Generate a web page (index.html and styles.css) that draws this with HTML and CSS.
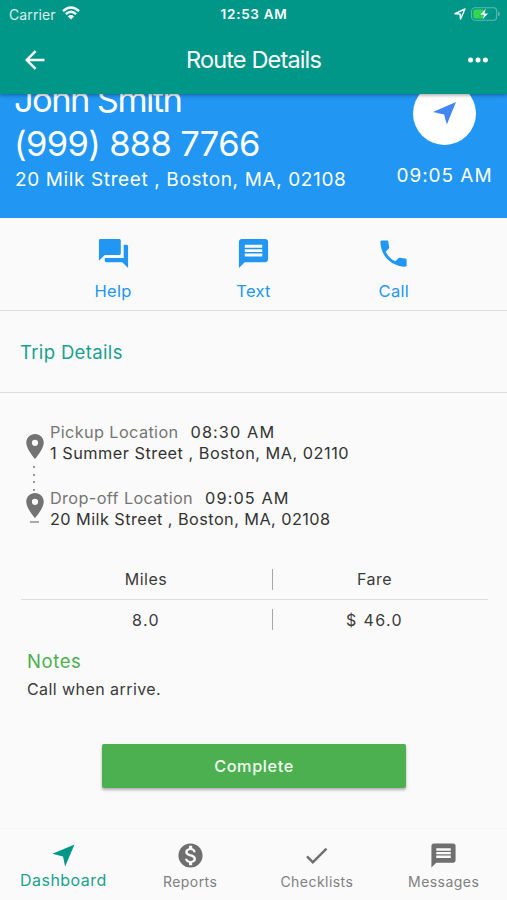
FILE: index.html
```html
<!DOCTYPE html>
<html lang="en">
<head>
<meta charset="utf-8">
<title>Route Details</title>
<link rel="stylesheet" href="styles.css">
</head>
<body>
<div class="screen">
  <header class="header">
    <div class="status">
      <div class="status-left">
        <span class="carrier">Carrier</span>
        <svg class="wifi" viewBox="0 0 18 14"><path fill="none" stroke="#fff" stroke-width="2.4" d="M1 5.2Q9-2.4 17 5.2M3.9 8.2Q9 3.4 14.1 8.2"/><path fill="#fff" d="M9 13.6 5.9 10.4Q9 7.6 12.1 10.4Z"/></svg>
      </div>
      <span class="clock">12:53 AM</span>
      <div class="status-right">
        <svg class="locator" viewBox="0 0 12 12"><path fill="none" stroke="#fff" stroke-width="1.4" stroke-linejoin="round" d="M1 5.7 11 1 6.5 11 6 6Z"/></svg>
        <svg class="battery" viewBox="0 0 30 14"><rect x=".6" y=".6" width="26" height="12.8" rx="3.5" fill="none" stroke="#63b9ae" stroke-width="1.1"/><path fill="#63b9ae" d="M28 4.5q1.8.6 1.8 2.5T28 9.5z"/><rect x="2.4" y="2.4" width="10.8" height="9.2" rx="1.8" fill="#32d74b"/><path fill="#fff" stroke="#009688" stroke-width=".5" d="M15.8.8 9 8h4l-1.400 5.200L18.200 6.300h-4z"/></svg>
      </div>
    </div>
    <div class="appbar">
      <svg class="back" viewBox="0 0 20 20"><path fill="none" stroke="#fff" stroke-width="2.4" d="M19.5 10H2M10.6 1.1 1.7 10l8.900 8.900"/></svg>
      <h1 class="title">Route Details</h1>
      <svg class="more" viewBox="0 0 20 6"><g fill="#fff"><circle cx="2.6" cy="3" r="2.5"/><circle cx="10" cy="3" r="2.5"/><circle cx="17.4" cy="3" r="2.5"/></g></svg>
    </div>
  </header>

  <section class="hero">
    <div class="contact">
      <div class="name">John Smith</div>
      <div class="phone">(999) 888 7766</div>
      <div class="address">20 Milk Street , Boston, MA, 02108</div>
    </div>
    <div class="arrival">
      <div class="navigate"><svg viewBox="0 0 24 24"><path fill="#4285f4" d="M24 0 14.4 23.5 11.6 13 0 10.4Z"/></svg></div>
      <div class="eta">09:05 AM</div>
    </div>
  </section>

  <nav class="actions">
    <a class="action"><svg viewBox="0 0 24 24"><path d="M21 6h-2v9H6v2c0 .55.45 1 1 1h11l4 4V7c0-.55-.45-1-1-1zm-4 6V3c0-.55-.45-1-1-1H3c-.55 0-1 .45-1 1v14l4-4h10c.55 0 1-.45 1-1z"/></svg><span>Help</span></a>
    <a class="action"><svg viewBox="0 0 24 24"><path d="M20 2H4c-1.100 0-1.990.9-1.990 2L2 22l4-4h14c1.100 0 2-.9 2-2V4c0-1.100-.9-2-2-2zm-2 12H6v-2h12v2zm0-3H6V9h12v2zm0-3H6V6h12v2z"/></svg><span>Text</span></a>
    <a class="action"><svg viewBox="0 0 24 24"><path d="M6.620 10.790c1.440 2.830 3.760 5.140 6.590 6.590l2.200-2.200c.27-.27.67-.36 1.020-.24 1.120.37 2.330.57 3.570.57.55 0 1 .45 1 1V20c0 .55-.45 1-1 1-9.390 0-17-7.610-17-17 0-.55.45-1 1-1h3.500c.55 0 1 .45 1 1 0 1.250.2 2.450.57 3.570.11.35.03.74-.25 1.020l-2.200 2.200z"/></svg><span>Call</span></a>
  </nav>

  <h2 class="section-title">Trip Details</h2>

  <main class="trip">
    <div class="route">
      <div class="track">
        <svg class="pin" viewBox="5 2 14 20"><path d="M12 2C8.130 2 5 5.130 5 9c0 5.250 7 13 7 13s7-7.750 7-13c0-3.870-3.130-7-7-7zm0 9.500a2.500 2.500 0 1 1 0-5 2.500 2.500 0 0 1 0 5z"/></svg>
        <div class="dots"><i></i><i></i><i></i><i></i></div>
        <svg class="pin" viewBox="5 2 14 20"><path d="M12 2C8.130 2 5 5.130 5 9c0 5.250 7 13 7 13s7-7.750 7-13c0-3.870-3.130-7-7-7zm0 9.500a2.500 2.500 0 1 1 0-5 2.500 2.500 0 0 1 0 5z"/></svg>
        <div class="dash"></div>
      </div>
      <div class="stops">
        <div class="stop">
          <div class="line"><span class="label">Pickup Location</span><span class="time">08:30 AM</span></div>
          <div class="line">1 Summer Street , Boston, MA, 02110</div>
        </div>
        <div class="stop">
          <div class="line"><span class="label">Drop-off Location</span><span class="time">09:05 AM</span></div>
          <div class="line dropoff">20 Milk Street , Boston, MA, 02108</div>
        </div>
      </div>
    </div>

    <div class="figures">
      <div class="row head"><span>Miles</span><i></i><span>Fare</span></div>
      <div class="row values"><span>8.0</span><i></i><span>$ 46.0</span></div>
    </div>

    <div class="notes">
      <h3>Notes</h3>
      <p>Call when arrive.</p>
    </div>

    <button class="complete">Complete</button>
  </main>

  <nav class="tabs">
    <a class="tab active"><svg viewBox="0 0 24 24"><path d="M23.500.5 13.700 23.500 11.500 13 .5 10.200Z"/></svg><span>Dashboard</span></a>
    <a class="tab"><svg viewBox="0 0 24 24"><path d="M12 2C6.480 2 2 6.480 2 12s4.480 10 10 10 10-4.480 10-10S17.520 2 12 2zm1.410 16.090V20h-2.670v-1.930c-1.710-.36-3.160-1.460-3.270-3.400h1.960c.1 1.050.82 1.870 2.650 1.870 1.960 0 2.400-.98 2.400-1.590 0-.83-.44-1.610-2.670-2.140-2.480-.6-4.180-1.620-4.180-3.670 0-1.720 1.390-2.840 3.110-3.210V4h2.670v1.950c1.860.45 2.790 1.860 2.850 3.390H14.300c-.05-1.110-.64-1.870-2.220-1.870-1.500 0-2.400.68-2.400 1.640 0 .84.65 1.390 2.670 1.910s4.180 1.390 4.180 3.910c-.01 1.830-1.380 2.830-3.120 3.160z"/></svg><span>Reports</span></a>
    <a class="tab"><svg viewBox="0 0 24 24"><path d="M9 16.170 4.830 12l-1.420 1.410L9 19 21 7l-1.410-1.410z"/></svg><span>Checklists</span></a>
    <a class="tab"><svg viewBox="0 0 24 24"><path d="M20 2H4c-1.100 0-1.990.9-1.990 2L2 22l4-4h14c1.100 0 2-.9 2-2V4c0-1.100-.9-2-2-2zm-2 12H6v-2h12v2zm0-3H6V9h12v2zm0-3H6V6h12v2z"/></svg><span>Messages</span></a>
  </nav>
</div>
</body>
</html>
```
FILE: styles.css
```css
* { box-sizing: border-box; margin: 0; padding: 0; }
body { font-family: Inter, "Liberation Sans", sans-serif; background: #fafafa; color: #3a3a3a; }
svg { display: block; flex: none; }
.screen { width: 507px; height: 900px; overflow: hidden; display: flex; flex-direction: column; white-space: nowrap; }

.header { flex: none; height: 94px; background: #009688; color: #fff; position: relative; z-index: 1; box-shadow: 0 1px 4px rgba(0,0,0,.4); }
.status { height: 28px; padding: 0 7px 0 9px; display: grid; grid-template-columns: 1fr auto 1fr; align-items: center; }
.status-left, .status-right { display: flex; align-items: center; gap: 6px; }
.status-right { justify-content: flex-end; gap: 5px; }
.carrier { font-size: 14px; letter-spacing: .1px; color: #d9f0ed; }
.wifi { width: 18px; height: 14px; margin-top: -2px; }
.clock { font-size: 13.5px; font-weight: 600; letter-spacing: .7px; margin-right: 1px; }
.locator { width: 12px; height: 12px; }
.battery { width: 29px; height: 14px; }
.appbar { height: 64px; padding: 0 19px 0 25px; display: grid; grid-template-columns: 1fr auto 1fr; align-items: center; }
.back { width: 20px; height: 20px; }
.title { font-size: 23.5px; line-height: 28px; font-weight: 400; letter-spacing: -.85px; margin: -1px 6px 0 0; }
.more { width: 20px; height: 6px; justify-self: end; }

.hero { flex: none; height: 124px; background: #2196f3; color: #fff; display: flex; justify-content: space-between; padding: 0 14px 0 15px; }
.contact { margin-top: -17px; }
.name, .phone { font-size: 34.5px; line-height: 45px; letter-spacing: -.65px; margin-left: -1px; }
.phone { margin-top: -1px; }
.name { letter-spacing: -1.6px; }
.address { font-size: 19px; line-height: 24px; letter-spacing: .62px; margin-top: 2px; }
.arrival { width: 97px; margin-top: -12px; display: flex; flex-direction: column; align-items: center; }
.navigate { width: 63px; height: 63px; border-radius: 50%; background: #fff; display: grid; place-items: center; }
.navigate svg { width: 23px; height: 23px; }
.eta { font-size: 19px; line-height: 24px; margin-top: 19px; letter-spacing: .95px; }

.actions { flex: none; height: 93px; padding: 18px 43px 0; display: grid; grid-template-columns: repeat(3, 1fr); border-bottom: 1px solid #dcdcdc; color: #2196f3; }
.action { display: flex; flex-direction: column; align-items: center; font-size: 16.5px; line-height: 20px; letter-spacing: .3px; gap: 10px; }
.action svg { width: 35px; height: 35px; fill: #2196f3; }

.section-title { flex: none; height: 82px; padding-left: 20px; line-height: 82px; font-size: 18.5px; font-weight: 400; letter-spacing: .35px; color: #1aa08f; border-bottom: 1px solid #dcdcdc; }

.trip { flex: 1; padding-top: 29px; }
.route { display: flex; padding-left: 26px; }
.track { width: 18px; margin-right: 6px; padding-top: 12px; display: flex; flex-direction: column; align-items: center; }
.pin { width: 18px; height: 25px; fill: #737373; }
.dots { height: 34px; padding: 7px 2px 0 0; display: flex; flex-direction: column; gap: 5.5px; }
.dots i { width: 2px; height: 2px; background: #999; }
.dash { width: 9px; height: 2px; background: #aaa; margin: 3px 2px 0 0; }
.stops { display: grid; gap: 25px; }
.line { font-size: 16.3px; line-height: 20.5px; letter-spacing: .5px; color: #333; }
.dropoff { letter-spacing: .43px; }
.label { color: #757575; margin-right: 12px; letter-spacing: .37px; }
.time { letter-spacing: 1.1px; }

.figures { margin: 30px 19px 0 21px; }
.row { height: 39px; display: grid; grid-template-columns: 250px 3px 1fr; align-items: center; text-align: center; font-size: 16px; letter-spacing: .5px; }
.row i { width: 1px; height: 21px; background: #a8a8a8; margin-left: 1px; }
.row span:last-child { padding-right: 13px; }
.values { letter-spacing: 1.4px; }
.head { height: 41px; border-bottom: 1px solid #dcdcdc; }

.notes { padding: 8px 27px 0; }
.notes h3 { font-size: 18.5px; line-height: 28px; font-weight: 400; letter-spacing: .6px; color: #4caf50; }
.notes p { font-size: 16px; line-height: 29px; letter-spacing: .43px; }

.complete { display: block; width: 304px; height: 44px; margin: 39.5px 0 0 102px; border: 0; border-radius: 2px; background: #4caf50; color: #f0faf0; font-family: inherit; font-size: 16.3px; font-weight: 500; letter-spacing: .6px; box-shadow: 0 2px 3px rgba(0,0,0,.3); }

.tabs { flex: none; height: 72px; border-top: 1px solid #f4f4f4; display: grid; grid-template-columns: repeat(4, 1fr); color: #808080; }
.tab { display: flex; flex-direction: column; align-items: center; padding-top: 12px; font-size: 14px; line-height: 24px; letter-spacing: .45px; }
.tab svg { width: 29px; height: 29px; fill: #6f6f6f; }
.active { color: #1aa08f; font-size: 16px; padding-top: 15px; gap: 2px; }
.tab.active svg { width: 23px; height: 23px; fill: #009688; }
.active span { line-height: 23px; }
```
